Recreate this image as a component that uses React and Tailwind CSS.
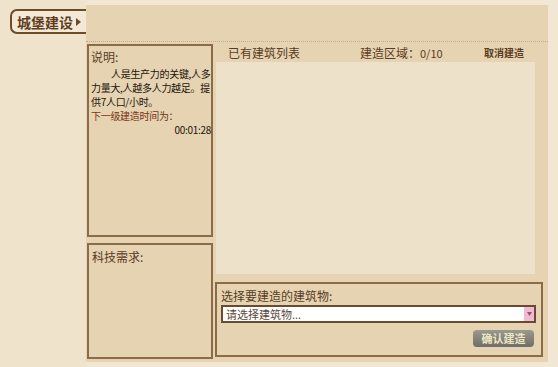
const font = { fontFamily: '"Noto Sans CJK SC", "Noto Sans", sans-serif' };

const Tab = () => (
  <div className="flex h-[25px] w-[76px] items-center gap-[3px] rounded-l-[7px] border-2 border-r-0 border-[#6e4b2a] bg-[#f4e9d6] pl-[5px]">
    <span className="text-[14px] font-bold leading-none text-[#5e3d1e]">城堡建设</span>
    <svg width="5" height="8" viewBox="0 0 5 8">
      <path d="M0 0 L5 4 L0 8 Z" fill="#6e4b2a" />
    </svg>
  </div>
);

const Box = ({ className, children }) => (
  <div className={`border-2 border-[#8c6c48] bg-[#e5d3b1] ${className}`}>{children}</div>
);

const lines = ["人是生产力的关键,人多", "力量大,人越多人力越足。提", "供7人口/小时。"];

export default function App() {
  return (
    <div className="flex h-[367px] w-[558px] overflow-hidden bg-[#f1e7d4]" style={font}>
      <div className="w-[86px] shrink-0 bg-[#efe3cb] pl-[10px] pt-[9px]">
        <Tab />
      </div>

      <div className="mt-[5px] flex h-[357px] w-[462px] flex-col bg-[#e5d3b1]">
        <div className="h-[37px] shrink-0 border-b border-dotted border-[#c3ac88]" />

        <div className="mt-[2px] flex">
          <div className="ml-[1px] flex w-[126px] shrink-0 flex-col gap-[6px]">
            <Box className="h-[193px] pl-[2px] pr-0 pt-[3px]">
              <div className="text-[12px] leading-[16px] text-[#5a3c24]">说明:</div>
              <div className="mt-[2px] whitespace-nowrap text-[10px] leading-[14px] tracking-[-0.3px] text-[#1e140c]">
                {lines.map((l, i) => (
                  <div key={l} className={i === 0 ? "pl-[20px]" : ""}>{l}</div>
                ))}
                <div className="text-[#7a3418]">下一级建造时间为：</div>
                <div className="text-right">00:01:28</div>
              </div>
            </Box>
            <Box className="h-[116px] px-[3px] pt-[3px] text-[12px] text-[#5a3c24]">科技需求:</Box>
          </div>

          <div className="flex flex-1 flex-col">
            <div className="flex h-[18px] items-center whitespace-nowrap text-[12px] leading-none text-[#5a3c24]">
              <span className="ml-[15px] w-[132px]">已有建筑列表</span>
              <span className="w-[124px]">
                建造区域：<span className="text-[11px]">0/10</span>
              </span>
              <span className="text-[10px] font-bold">取消建造</span>
            </div>
            <div className="ml-[3px] h-[212px] w-[319px] bg-[#ede1c9]" />
            <Box className="ml-[2px] mt-[8px] h-[75px] w-[328px] px-[4px] pt-[4px]">
              <div className="text-[12px] leading-[16px] text-[#5a3c24]">选择要建造的建筑物:</div>
              <div className="mt-[1px] flex h-[18px] w-[315px] items-stretch border-2 border-[#6b4a32] bg-white">
                <span className="flex-1 pl-[3px] text-[11px] leading-[14px] text-[#5a4a3a]">请选择建筑物...</span>
                <span className="flex w-[10px] items-center justify-center bg-[#f2b9d2]">
                  <svg width="5" height="4" viewBox="0 0 5 4">
                    <path d="M0 0 L5 0 L2.5 4 Z" fill="#8a5a70" />
                  </svg>
                </span>
              </div>
              <div className="mt-[7px] flex justify-end pr-[3px]">
                <span className="flex h-[17px] w-[61px] items-center justify-center rounded-[4px] bg-gradient-to-b from-[#9a9a90] to-[#6e6e66] text-[11px] font-bold text-[#efe6c4]">
                  确认建造
                </span>
              </div>
            </Box>
          </div>
        </div>
      </div>
    </div>
  );
}
